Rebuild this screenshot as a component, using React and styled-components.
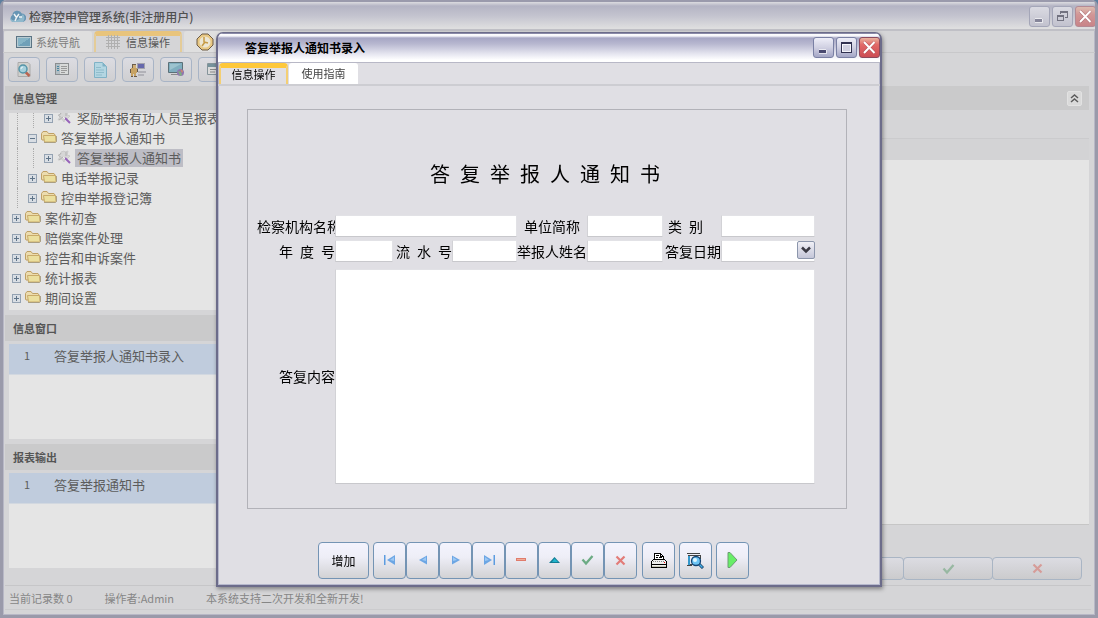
import { Fragment } from "react";
import styled, { createGlobalStyle, css } from "styled-components";

const GlobalStyle = createGlobalStyle`
  * {
    box-sizing: border-box;
  }

  body {
    margin: 0;
    background: #5d7f9f;
    font-family: "Noto Sans CJK SC", sans-serif;
    font-size: 11px;
    color: #666;
  }

  button, input, select, textarea {
    font-family: inherit;
    margin: 0;
    padding: 0;
  }

  svg {
    display: block;
    flex: none;
  }
`;

/* ---------- main window ---------- */

const Window = styled.div`
  display: flex;
  flex-direction: column;
  min-height: 100vh;
  background: #d5d5d7;
  border: 3px solid #9a9aaa;
  border-top: 0;
  border-radius: 6px 6px 0 0;
  box-shadow: inset 1px -1px 0 #b8b8c6, inset -1px 0 0 #b8b8c6;
  overflow: hidden;
`;

const TitleBar = styled.header`
  display: flex;
  align-items: center;
  gap: 3px;
  height: 31px;
  padding: 1px 0 0 6px;
  border-top: 2px solid #9a9aac;
  border-bottom: 2px solid #c0c0c6;
  background: linear-gradient(#dcdce0 0, #b4b4c4 4px, #c4c4cf 14px, #dededf 26px);
  color: #505050;
`;

const TitleText = styled.h1`
  flex: 1;
  margin: 0;
  font-size: 12px;
  font-weight: ${(props) => (props.$bold ? 700 : 500)};
`;

const WindowButtons = styled.div`
  display: flex;
  gap: 2px;
  margin-right: -1px;
`;

const WindowButton = styled.button`
  display: grid;
  place-items: center;
  width: 21px;
  height: 21px;
  border: 1px solid #7a80a4;
  border-radius: 3px;
  background: linear-gradient(#eeeef8, #d0d0e2 50%, #a4a6c6);
  ${(props) =>
    props.$close &&
    css`
      border-color: #8c4a5c;
      background: linear-gradient(#e9b4a0, #e26a68 35%, #cc4c54);
    `}
  ${(props) =>
    props.$dim &&
    css`
      border-color: #a4a6b8;
      background: linear-gradient(#dadae2, #c2c2ce);
    `}
  ${(props) =>
    props.$dim &&
    props.$close &&
    css`
      border-color: #b48a94;
      background: linear-gradient(#dcbcb0, #d29696 40%, #c88488);
    `}
`;

const TabBar = styled.nav`
  display: flex;
  align-items: flex-end;
  gap: 2px;
  height: 22px;
  padding-left: 1px;
  border-bottom: 1px solid #c8c8ca;
`;

const Tab = styled.button`
  display: flex;
  align-items: center;
  justify-content: center;
  gap: 4px;
  width: 88px;
  height: 21px;
  border: 0;
  border-radius: 3px 3px 0 0;
  background: #dfdfdf;
  color: #7c7c7c;
  font-size: 11px;
  ${(props) =>
    props.$active &&
    css`
      gap: 6px;
      border-top: 5px solid #e8c47c;
      border-left: 2px solid #e4cc98;
      border-right: 2px solid #e4cc98;
      border-radius: 4px 4px 0 0;
      padding-bottom: 4px;
      background: #d5d5d7;
      color: #555;
    `}
`;

const IconTab = styled(Tab)`
  justify-content: flex-start;
  padding-left: 12px;
`;

const Toolbar = styled.div`
  display: flex;
  gap: 6px;
  height: 33px;
  padding: 4px 5px;
`;

const ToolButton = styled.button`
  display: grid;
  place-items: center;
  width: 32px;
  height: 25px;
  border: 1px solid #a8b4c6;
  border-radius: 4px;
  background: linear-gradient(#dcdce2, #cfcfd1);
`;

const Main = styled.main`
  display: grid;
  grid-template-columns: 260px 1fr;
  flex: 1;
  padding: 0 6px 0 2px;
`;

const Sidebar = styled.aside`
  display: flex;
  flex-direction: column;
  min-width: 0;
  padding-bottom: 17px;
`;

const SectionHeader = styled.h2`
  display: flex;
  align-items: center;
  justify-content: space-between;
  height: ${(props) => (props.$first ? "24px" : "26px")};
  margin: 0;
  padding: 0 7px 0 8px;
  background: #cacacb;
  color: #555;
  font-size: 11px;
  font-weight: 700;
`;

const SectionBody = styled.div`
  flex: ${(props) => (props.$grow ? "1 1 0" : "none")};
  height: ${(props) => (props.$grow ? "auto" : "95px")};
  margin: 3px 4px 5px;
  background: #e5e5e5;
  overflow: hidden;

  &:last-child {
    margin-bottom: 0;
  }
`;

const Tree = styled.ul`
  margin: -5px 0 0;
  padding: 0 0 0 3px;
  list-style: none;
`;

const TreeRow = styled.li`
  display: flex;
  align-items: center;
  height: 20px;
  font-size: 13px;
  color: #5c5c5c;
  white-space: nowrap;
`;

const Guide = styled.span`
  align-self: stretch;
  width: 16px;

  &::before {
    content: "";
    display: block;
    width: 5px;
    height: 100%;
    border-right: 1px dotted #aaa;
  }
`;

const TreeIcon = styled.span`
  width: 18px;
  margin-bottom: 3px;
`;

const Toggle = styled.span`
  width: 13px;
`;

const TreeLabel = styled.span`
  height: 18px;
  padding: 0 2px;
  line-height: 18px;
  background: ${(props) => (props.$selected ? "#bdbdc5" : "transparent")};
`;

const ListRow = styled.div`
  display: grid;
  grid-template-columns: 36px 1fr;
  column-gap: 9px;
  height: 31px;
  border-bottom: 1px solid #d2d8e0;
  background: #c0ccdd;
  color: #5c5c5c;
  font-size: 13px;
  line-height: 23px;

  & > span:first-child {
    font-size: 11px;
    text-align: center;
  }
`;

const Workspace = styled.section`
  display: flex;
  flex-direction: column;
  min-width: 0;
`;

const CollapseButton = styled.button`
  display: grid;
  place-items: center;
  width: 15px;
  height: 15px;
  border: 1px solid #e2e2e2;
  border-radius: 2px;
  background: #dadada;
`;

const Strip = styled.div`
  height: 28px;
`;

const GridHeader = styled.div`
  height: 22px;
  border-top: 1px solid #cbcbcd;
  background: #d3d3d5;
`;

const GridBody = styled.div`
  flex: 1;
  background: #e5e5e5;
  border-bottom: 1px solid #c6c6c6;
`;

const GridFooter = styled.div`
  display: flex;
  justify-content: flex-end;
  height: 60px;
  padding: 32px 7px 5px 0;
`;

const FooterButton = styled.button`
  display: grid;
  place-items: center;
  width: 90px;
  height: 23px;
  margin-left: -1px;
  border: 1px solid #a9b5c4;
  border-radius: 4px;
  background: linear-gradient(#dcdce2, #cbcbcd);
`;

const StatusBar = styled.footer`
  display: flex;
  align-items: center;
  gap: 32px;
  height: 25px;
  margin: 0 4px 5px 2px;
  padding-left: 4px;
  border-top: 1px solid #c6c6c8;
  border-bottom: 1px solid #cbcbcd;
  color: #868686;
`;

/* ---------- dialog ---------- */

const Overlay = styled.div`
  position: fixed;
  inset: 0;
  display: flex;
  align-items: center;
  justify-content: center;
`;

const Dialog = styled.section`
  width: 666px;
  border: 2px solid #6c6c8a;
  border-top-width: 1px;
  border-radius: 7px 7px 0 0;
  background: #e0dfe4;
  box-shadow: inset 1px -1px 0 #b6b8cc, inset -1px 0 0 #b6b8cc, 1px 2px 4px rgba(0, 0, 0, 0.4);
  overflow: hidden;
`;

const DialogTitleBar = styled(TitleBar)`
  height: 30px;
  padding: 0 1px 0 27px;
  border-top: 1px solid #8a8aa8;
  border-bottom: 1px solid #b8b8c6;
  background: linear-gradient(#fff 0, #f4f4fa 2px, #a6a6c4 4px, #b8b8d0 10px, #e6e6f0 20px, #fff 26px);
  color: #000;
`;

const DialogTabs = styled(TabBar)`
  gap: 1px;
  height: 23px;
  border-bottom: 2px solid #cdcdd2;
`;

const DialogTab = styled(Tab)`
  width: 69px;
  background: #fff;
  color: #444;
  ${(props) =>
    props.$active &&
    css`
      border-color: #fec83a;
      border-left-color: #f4cf74;
      border-right-color: #f4cf74;
      background: #e0dfe4;
      color: #000;
    `}
`;

const FormPanel = styled.form`
  margin: 23px 33px 33px 29px;
  padding: 50px 0 24px;
  border: 1px solid #b2b2b8;
  color: #000;
`;

const FormTitle = styled.h2`
  margin: 0 0 27px;
  padding-right: 4px;
  font-size: 20px;
  font-weight: 400;
  line-height: 28px;
  text-align: center;
`;

const FormGrid = styled.div`
  display: grid;
  grid-template-columns: 78px 58fr 59px 65fr 70px 76fr 58px 94fr;
  row-gap: 3px;
  padding: 0 31px 0 9px;
`;

const Label = styled.label`
  align-self: center;
  height: 22px;
  overflow: hidden;
  font-size: 14px;
  line-height: 22px;
  text-align: ${(props) => props.$align || "right"};
  padding-left: ${(props) => (props.$indent ? "5px" : "0")};
  white-space: nowrap;
`;

const fieldStyle = css`
  width: 100%;
  min-width: 0;
  border: 1px solid #e2e2e6;
  border-left-color: #d2d2d6;
  border-bottom-color: #c8c8cc;
  border-radius: 0;
  background: #fff;
  font-size: 14px;
`;

const Field = styled.input`
  ${fieldStyle}
  height: 22px;
  grid-column: span ${(props) => props.$span || 1};
`;

const SelectBox = styled.div`
  position: relative;
`;

const Select = styled.select`
  ${fieldStyle}
  height: 22px;
  appearance: none;
`;

const SelectArrow = styled.span`
  position: absolute;
  top: 1px;
  right: 0;
  display: grid;
  place-items: center;
  width: 18px;
  height: 18px;
  border: 1px solid #8c96ac;
  border-radius: 2px;
  background: linear-gradient(#f0f0f6, #c4c6d8);
  pointer-events: none;
`;

const Content = styled.textarea`
  ${fieldStyle}
  grid-column: span 7;
  height: 215px;
  resize: none;
`;

const ContentRow = styled(FormGrid)`
  margin-top: 7px;
`;

const Actions = styled.div`
  display: flex;
  gap: 4px;
  padding: 0 0 6px 100px;
`;

const ButtonGroup = styled.div`
  display: flex;
  margin-right: 1px;
`;

const ActionButton = styled.button`
  display: grid;
  place-items: center;
  width: ${(props) => (props.$wide ? "51px" : "33px")};
  height: 37px;
  border: 1px solid #7494b4;
  border-radius: 4px;
  background: linear-gradient(#f3f3fd, #eeeef7 40%, #d2d2d4);
  color: #000;
  font-size: 12px;
`;

/* ---------- icons ---------- */

const Logo = () => (
  <svg width="17" height="15" viewBox="0 0 17 15">
    <path d="M4 13a4 4 0 0 1-.6-7A5 5 0 0 1 12.800 4.500 4.200 4.200 0 0 1 13 13z" fill="#6795b4" />
    <path d="M1 9q4 5 9 1l4-5q3 4 0 8H4q-3-1-3-4z" fill="#8fb8cc" />
    <path d="M5 5l2.500 3.500L10 5M7.500 8.500L6 12M10 8h3" stroke="#eef2f4" strokeWidth="1.500" fill="none" />
  </svg>
);

const MinimizeIcon = ({ color }) => (
  <svg width="13" height="13" shapeRendering="crispEdges">
    <path d="M2 9h7v3H2z" fill={color} />
    <path d="M2 8h7M9 9v4M2 12.500h8" stroke="#fff" opacity=".6" />
  </svg>
);

const MaximizeIcon = () => (
  <svg width="13" height="13" shapeRendering="crispEdges">
    <path d="M1 1h11v11H1z" fill="#303050" />
    <path d="M2 3h9v8H2z" fill="#f4f4fa" />
    <path d="M3 4h7v6H3z" fill="#cfcfe0" />
  </svg>
);

const RestoreIcon = () => (
  <svg width="13" height="13" fill="none" stroke="#727280" shapeRendering="crispEdges">
    <path d="M4.500 4V1.500h7v6H9M4 2.500h8M1.500 5.500h6v5h-6zM1 6.500h7" />
  </svg>
);

const CloseIcon = () => (
  <svg width="15" height="15">
    <path d="M2 2l10.500 11M12.500 2L2 13" stroke="#7c3440" strokeWidth="3" opacity=".5" />
    <path d="M2 2l10.500 11M12.500 2L2 13" stroke="#fff" strokeWidth="2" />
  </svg>
);

const ScreenIcon = () => (
  <svg width="16" height="12" shapeRendering="crispEdges">
    <path d="M0 0h16v12H0z" fill="#5b7484" />
    <path d="M1 1h14v10H1z" fill="#b8cbd2" />
    <path d="M2 2h12v8H2z" fill="#6fa0b8" />
    <path d="M2 2h12L2 10z" fill="#86b4c6" />
  </svg>
);

const GridIcon = () => (
  <svg width="14" height="14" shapeRendering="crispEdges" stroke="#b0b0b0">
    <path d="M2.500 0v14M5.500 0v14M8.500 0v14M11.500 0v14M0 2.500h14M0 5.500h14M0 8.500h14M0 11.500h14" />
  </svg>
);

const ClockIcon = () => (
  <svg width="18" height="18">
    <path d="M6 1h6l5 5v6l-5 5H6l-5-5V6z" fill="#e8c883" stroke="#6d5b45" />
    <circle cx="9" cy="9" r="5.500" fill="#ece6d4" />
    <path d="M8 4v5l4 1M9 9l-3 4" stroke="#c69b45" strokeWidth="1.500" fill="none" />
  </svg>
);

const SearchDocIcon = () => (
  <svg width="16" height="16">
    <path d="M2 .5h10l2 2v12H2z" fill="#d0d0cc" stroke="#aaa" />
    <path d="M9.500 10l4 4" stroke="#ba6450" strokeWidth="2.500" />
    <circle cx="7" cy="7" r="4" fill="#a5d0dc" stroke="#5494a8" strokeWidth="1.500" />
    <path d="M5 7q0-2 2-2" stroke="#eef6f8" fill="none" />
  </svg>
);

const PropertiesIcon = () => (
  <svg width="14" height="13" shapeRendering="crispEdges">
    <path d="M.5.5h13v11H.5z" fill="#d8dad9" stroke="#8b8e90" />
    <path d="M1 1h4v10H1z" fill="#b2bec4" />
    <path d="M2 3h2v1H2zM2 5h2v1H2zM2 7h2v1H2z" fill="#4a86a0" />
    <path d="M6 3.500h6M6 5.500h6M6 7.500h6M6 9.500h4" stroke="#999" />
  </svg>
);

const NoteIcon = () => (
  <svg width="14" height="16">
    <path d="M1.500.5h8l4 4v11h-12z" fill="#b3d6e2" stroke="#7fb2c6" />
    <path d="M9.500.5v4h4z" fill="#7fb2c6" />
    <path d="M3 5.500h5M3 8h8M3 10.500h8M3 13h6" stroke="#8fbccb" />
  </svg>
);

const PersonIcon = () => (
  <svg width="17" height="16" shapeRendering="crispEdges">
    <path d="M7 1h8v6H7z" fill="#a2a2ac" />
    <path d="M8 2h6v4H8z" fill="#6668ac" />
    <path d="M8 9h8v2H8zM8 12h6v2H8z" fill="#b2b2b8" />
    <path d="M2 2h4v4H2z" fill="#6a5c4c" />
    <path d="M3 3h3v3H3z" fill="#d0b078" />
    <path d="M1 6h6v5H6v4H4v-3H3v3H1z" fill="#c7a364" />
    <path d="M0 7h1v4H0zM7 7h1v3H7zM1 14h2v1H1zM4 14h3v1H4z" fill="#66584a" />
  </svg>
);

const MonitorIcon = () => (
  <svg width="17" height="15">
    <path d="M.5.5h14v10H.5z" fill="#80aebf" stroke="#5b7078" />
    <path d="M2 2h11L2 8z" fill="#9cc3cf" />
    <path d="M3 12.500h7" stroke="#8a8a8a" />
    <circle cx="12.500" cy="10.500" r="3.500" fill="#8f75b0" />
    <path d="M10 9l3 1 1 3-2 1z" fill="#7fae80" />
    <path d="M12 7l3 2-1 2z" fill="#d48a64" />
  </svg>
);

const WindowArrowIcon = () => (
  <svg width="15" height="14">
    <path d="M.5.5h11v11H.5z" fill="#dadada" stroke="#85949a" />
    <path d="M1 1h10v3H1z" fill="#76929c" />
    <path d="M3 6.500h6M3 9h5" stroke="#888" />
    <path d="M15 4v8l-5-4z" fill="#6da37e" />
  </svg>
);

const FolderIcon = () => (
  <svg width="16" height="14">
    <path d="M.5 9V3.500L2 1.500h4l1.500 2h5.500l1 1.500v5H1z" fill="#ecdcae" stroke="#bfa065" />
    <path d="M2.500 5.500h12l.500 6-.500.500H3.500z" fill="#ebdf9e" stroke="#c9ab6a" />
    <path d="M3 12.500h11.500l1-1V6" stroke="#978c70" fill="none" opacity=".7" />
  </svg>
);

const WandIcon = () => (
  <svg width="14" height="14" viewBox="0 0 14 14" fill="none">
    <path d="M4 2l3-1 1 1 3-1-1 4 3 1-3 3-2-1-1 4-2-3-4 1 2-3-2-2 3-1z" fill="#d6d6d6" stroke="#cacaca" />
    <path d="M4 3L2 5.500 4 7.500M9 2v4M2 10l4-3" stroke="#b2b2b2" />
    <path d="M8 8l5 5" stroke="#9762ba" strokeWidth="2" />
    <path d="M6 7l2 2" stroke="#efefef" />
  </svg>
);

const ToggleIcon = ({ open }) => (
  <svg width="9" height="9" shapeRendering="crispEdges" fill="none">
    <path d="M.5.5h8v8h-8z" fill="#d9dee4" stroke="#94a2b2" />
    <path d={open ? "M2 4.500h5" : "M2 4.500h5M4.500 2v5"} stroke="#5f7488" />
  </svg>
);

const ChevronsIcon = () => (
  <svg width="9" height="9" fill="none" stroke="#5c5c5c" strokeWidth="1.500">
    <path d="M1 4l3.500-3L8 4M1 8l3.500-3L8 8" />
  </svg>
);

const CheckIcon = ({ color = "#6cab84" }) => (
  <svg width="13" height="12" fill="none">
    <path d="M1.500 5.500l3.500 4L11.500 2" stroke={color} strokeWidth="2.300" />
  </svg>
);

const CrossIcon = ({ color = "#e27c78" }) => (
  <svg width="11" height="11" fill="none">
    <path d="M1.500 1.500l8 8M9.500 1.500l-8 8" stroke={color} strokeWidth="2.200" />
  </svg>
);

const NavIcon = ({ flip, bar }) => (
  <svg width="12" height="10" viewBox="0 0 12 10">
    <g transform={flip ? "translate(12 0) scale(-1 1)" : undefined}>
      {bar && <path d="M0 0h1.500v10H0z" fill="#5c9ce0" />}
      <path d={bar ? "M3 5l8-5v10z" : "M2 5l8-4.500v9z"} fill="#6ca6e4" />
      <path d={bar ? "M6 5l4-3v4z" : "M5 5l4-3v4z"} fill="#9cc8f4" />
    </g>
  </svg>
);

const MinusIcon = () => (
  <svg width="11" height="4" shapeRendering="crispEdges">
    <path d="M0 0h10v3H0z" fill="#e07c6c" />
    <path d="M1 1h8v1H1z" fill="#f0ac98" />
  </svg>
);

const UpIcon = () => (
  <svg width="11" height="6">
    <path d="M5.500 0L11 6H0z" fill="#127c94" />
    <path d="M5.500 1.500L9 5H3z" fill="#20b4cc" />
  </svg>
);

const PrinterIcon = () => (
  <svg width="16" height="17" shapeRendering="crispEdges">
    <path d="M3.500 7V1.500h6l3 3V7M9.500 1v3h3" fill="#fff" stroke="#000" />
    <path d="M5 3.500h3M5 5.500h2M8 5.500h3" stroke="#000" />
    <path d="M.5 9.500l2-2h11l2 2v6H.5z" fill="#eee" stroke="#000" />
    <path d="M2 9.500h12" stroke="#888" strokeDasharray="1 1" />
    <path d="M1 12.500h14" stroke="#000" />
    <path d="M1 13.500h14v1H1z" fill="#c8c8b8" />
    <path d="M13 10h1v1h-1z" fill="#f00" />
  </svg>
);

const PreviewIcon = () => (
  <svg width="17" height="17">
    <path d="M0 1.500h13M1 3.500h12.500V7M2 12.500h4M0 13.500h5" stroke="#444" fill="none" shapeRendering="crispEdges" />
    <path d="M1 4h2v9H1z" fill="#3498cc" />
    <path d="M12 12l4 4" stroke="#103c64" strokeWidth="3" />
    <path d="M12 12l3.500 3.500" stroke="#48b0e8" strokeWidth="1.500" />
    <circle cx="9" cy="9" r="4.500" fill="#6cc4f4" stroke="#144474" strokeWidth="1.300" />
    <circle cx="8" cy="8" r="2" fill="#def6ff" />
  </svg>
);

const PlayIcon = () => (
  <svg width="11" height="16">
    <path d="M1 .5h2L10 8l-7 7.500H1z" fill="#68ee68" stroke="#6c9c74" />
  </svg>
);

const ArrowDownIcon = () => (
  <svg width="10" height="8" fill="none">
    <path d="M1 1.500l4 4 4-4" stroke="#3a3a44" strokeWidth="2.500" />
  </svg>
);

/* ---------- data ---------- */

const treeItems = [
  { level: 2, label: "奖励举报有功人员呈报表", leaf: true },
  { level: 1, label: "答复举报人通知书", open: true },
  { level: 2, label: "答复举报人通知书", leaf: true, selected: true },
  { level: 1, label: "电话举报记录" },
  { level: 1, label: "控申举报登记簿" },
  { level: 0, label: "案件初查" },
  { level: 0, label: "赔偿案件处理" },
  { level: 0, label: "控告和申诉案件" },
  { level: 0, label: "统计报表" },
  { level: 0, label: "期间设置" },
];

const tools = [
  ["查询", SearchDocIcon],
  ["属性", PropertiesIcon],
  ["文档", NoteIcon],
  ["用户", PersonIcon],
  ["网络", MonitorIcon],
  ["导出", WindowArrowIcon],
];

const recordActions = [
  ["首条", <NavIcon bar />],
  ["上一条", <NavIcon />],
  ["下一条", <NavIcon flip />],
  ["末条", <NavIcon bar flip />],
  ["删除", <MinusIcon />],
  ["编辑", <UpIcon />],
  ["保存", <CheckIcon />],
  ["取消", <CrossIcon />],
];

function NoticeDialog() {
  return (
    <Overlay>
      <Dialog role="dialog" aria-labelledby="dialog-title">
        <DialogTitleBar>
          <TitleText id="dialog-title" $bold>
            答复举报人通知书录入
          </TitleText>
          <WindowButtons>
            <WindowButton aria-label="最小化">
              <MinimizeIcon color="#4a4a70" />
            </WindowButton>
            <WindowButton aria-label="最大化">
              <MaximizeIcon />
            </WindowButton>
            <WindowButton $close aria-label="关闭">
              <CloseIcon />
            </WindowButton>
          </WindowButtons>
        </DialogTitleBar>

        <DialogTabs>
          <DialogTab $active>信息操作</DialogTab>
          <DialogTab>使用指南</DialogTab>
        </DialogTabs>

        <FormPanel>
          {/* en spaces keep the half-width gap between the characters */}
          <FormTitle>{"答\u2002复\u2002举\u2002报\u2002人\u2002通\u2002知\u2002书"}</FormTitle>
          <FormGrid>
            <Label htmlFor="org" $align="left">检察机构名称</Label>
            <Field id="org" $span={3} />
            <Label htmlFor="short" $align="center">单位简称</Label>
            <Field id="short" />
            <Label htmlFor="kind" $align="left" $indent>{"类\u2002别"}</Label>
            <Field id="kind" />

            <Label htmlFor="year">{"年\u2002度\u2002号"}</Label>
            <Field id="year" />
            <Label htmlFor="serial">{"流\u2002水\u2002号"}</Label>
            <Field id="serial" />
            <Label htmlFor="reporter">举报人姓名</Label>
            <Field id="reporter" />
            <Label htmlFor="date">答复日期</Label>
            <SelectBox>
              <Select id="date" />
              <SelectArrow>
                <ArrowDownIcon />
              </SelectArrow>
            </SelectBox>
          </FormGrid>
          <ContentRow>
            <Label htmlFor="content">答复内容</Label>
            <Content id="content" />
          </ContentRow>
        </FormPanel>

        <Actions>
          <ActionButton $wide>增加</ActionButton>
          <ButtonGroup>
            {recordActions.map(([name, icon]) => (
              <ActionButton key={name} aria-label={name}>
                {icon}
              </ActionButton>
            ))}
          </ButtonGroup>
          <ActionButton aria-label="打印">
            <PrinterIcon />
          </ActionButton>
          <ActionButton aria-label="预览">
            <PreviewIcon />
          </ActionButton>
          <ActionButton aria-label="执行">
            <PlayIcon />
          </ActionButton>
        </Actions>
      </Dialog>
    </Overlay>
  );
}

export default function App() {
  return (
    <Fragment>
      <GlobalStyle />
      <Window>
        <TitleBar>
          <Logo />
          <TitleText>检察控申管理系统(非注册用户)</TitleText>
          <WindowButtons>
            <WindowButton $dim aria-label="最小化">
              <MinimizeIcon color="#85859a" />
            </WindowButton>
            <WindowButton $dim aria-label="还原">
              <RestoreIcon />
            </WindowButton>
            <WindowButton $dim $close aria-label="关闭">
              <CloseIcon />
            </WindowButton>
          </WindowButtons>
        </TitleBar>

        <TabBar>
          <Tab>
            <ScreenIcon />
            系统导航
          </Tab>
          <Tab $active>
            <GridIcon />
            信息操作
          </Tab>
          <IconTab aria-label="提醒">
            <ClockIcon />
          </IconTab>
        </TabBar>

        <Toolbar>
          {tools.map(([name, Icon]) => (
            <ToolButton key={name} aria-label={name}>
              <Icon />
            </ToolButton>
          ))}
        </Toolbar>

        <Main>
          <Sidebar>
            <SectionHeader $first>信息管理</SectionHeader>
            <SectionBody $grow>
              <Tree>
                {treeItems.map(({ level, label, open, leaf, selected }, i) => (
                  <TreeRow key={i}>
                    {Array.from({ length: level }, (_, n) => (
                      <Guide key={n} />
                    ))}
                    <Toggle>
                      <ToggleIcon open={open} />
                    </Toggle>
                    <TreeIcon>{leaf ? <WandIcon /> : <FolderIcon />}</TreeIcon>
                    <TreeLabel $selected={selected}>{label}</TreeLabel>
                  </TreeRow>
                ))}
              </Tree>
            </SectionBody>

            <SectionHeader>信息窗口</SectionHeader>
            <SectionBody>
              <ListRow>
                <span>1</span>
                <span>答复举报人通知书录入</span>
              </ListRow>
            </SectionBody>

            <SectionHeader>报表输出</SectionHeader>
            <SectionBody>
              <ListRow>
                <span>1</span>
                <span>答复举报通知书</span>
              </ListRow>
            </SectionBody>
          </Sidebar>

          <Workspace>
            <SectionHeader as="div" $first>
              <span />
              <CollapseButton aria-label="收起">
                <ChevronsIcon />
              </CollapseButton>
            </SectionHeader>
            <Strip />
            <GridHeader />
            <GridBody />
            <GridFooter>
              <FooterButton aria-label="新增" />
              <FooterButton aria-label="修改" />
              <FooterButton aria-label="保存">
                <CheckIcon color="#98b8a2" />
              </FooterButton>
              <FooterButton aria-label="取消">
                <CrossIcon color="#d69c98" />
              </FooterButton>
            </GridFooter>
          </Workspace>
        </Main>

        <StatusBar>
          <span>当前记录数 0</span>
          <span>操作者:Admin</span>
          <span>本系统支持二次开发和全新开发!</span>
        </StatusBar>
      </Window>
      <NoticeDialog />
    </Fragment>
  );
}
